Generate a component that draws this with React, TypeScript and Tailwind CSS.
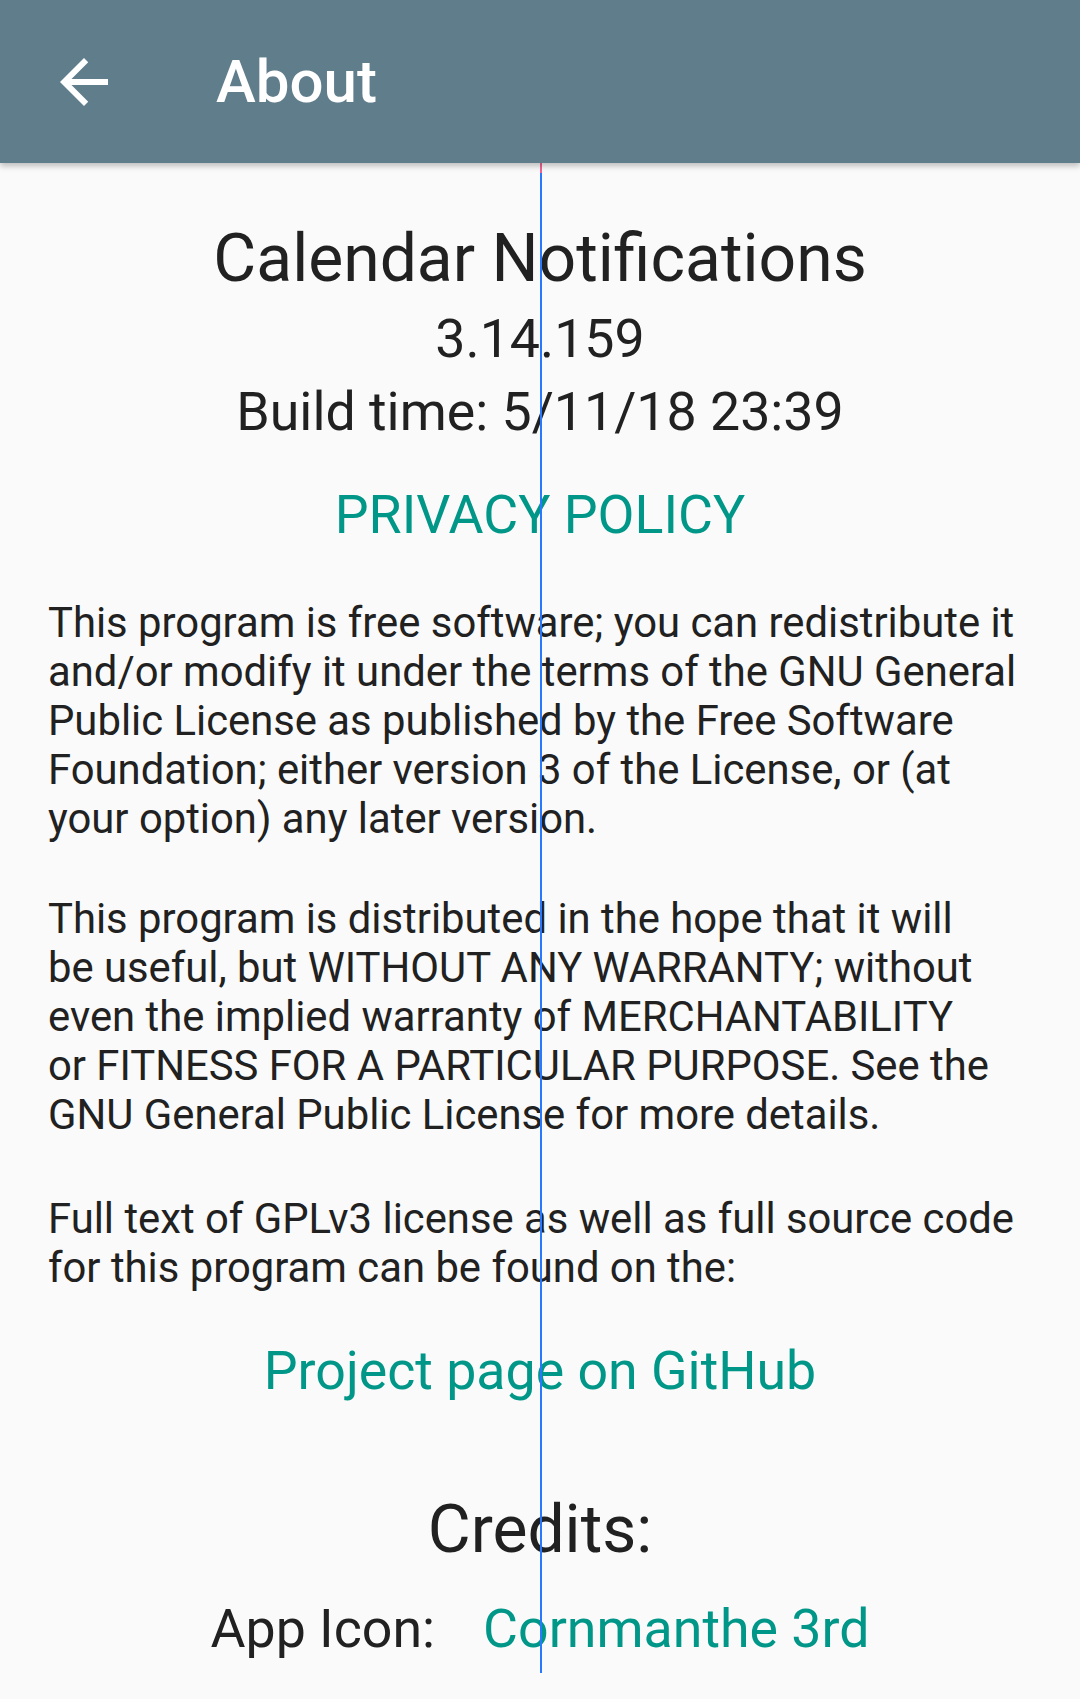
import React from "react";

const body = [
  [
    "This program is free software; you can redistribute it",
    "and/or modify it under the terms of the GNU General",
    "Public License as published by the Free Software",
    "Foundation; either version 3 of the License, or (at",
    "your option) any later version.",
  ],
  [
    "This program is distributed in the hope that it will",
    "be useful, but WITHOUT ANY WARRANTY; without",
    "even the implied warranty of MERCHANTABILITY",
    "or FITNESS FOR A PARTICULAR PURPOSE. See the",
    "GNU General Public License for more details.",
  ],
  [
    "Full text of GPLv3 license as well as full source code",
    "for this program can be found on the:",
  ],
];

function Paragraph({ lines, className }: { lines: string[]; className?: string }) {
  return (
    <p className={"px-[48px] text-[41.8px] leading-[49px] text-[#212121] " + (className ?? "")}>
      {lines.map((l) => (
        <span key={l} className="block whitespace-nowrap">
          {l}
        </span>
      ))}
    </p>
  );
}

export default function App() {
  return (
    <div
      className="relative w-[1080px] h-[1699px] bg-[#fafafa] overflow-hidden"
      style={{ fontFamily: "Roboto, 'Noto Sans', sans-serif" }}
    >
      <header className="relative z-10 h-[163px] bg-[#607d8b] flex items-center shadow-[0_3px_6px_rgba(0,0,0,0.25)]">
        <button className="ml-[48px] w-[72px] h-[72px] flex items-center justify-center">
          <svg viewBox="0 0 24 24" width="72" height="72" fill="#ffffff">
            <path d="M20 11H7.83l5.59-5.59L12 4l-8 8 8 8 1.41-1.41L7.83 13H20v-2z" />
          </svg>
        </button>
        <h1 className="ml-[96px] text-[60px] font-medium text-white leading-none">About</h1>
      </header>

      <main className="flex flex-col">
        <div className="pt-[57px] flex flex-col items-center text-[#212121]">
          <h2 className="text-[66px] leading-[77px]">Calendar Notifications</h2>
          <div className="mt-[10px] text-[53.7px] leading-[63px]">3.14.159</div>
          <div className="mt-[10px] text-[53.7px] leading-[63px]">Build time: 5/11/18 23:39</div>
          <a className="mt-[40px] text-[53.7px] leading-[63px] text-[#009688]">PRIVACY POLICY</a>
        </div>

        <Paragraph lines={body[0]} className="mt-[52px]" />
        <Paragraph lines={body[1]} className="mt-[51px]" />
        <Paragraph lines={body[2]} className="mt-[55px]" />

        <div className="flex flex-col items-center">
          <a className="mt-[47px] text-[53.7px] leading-[63px] text-[#009688]">Project page on GitHub</a>
          <h2 className="mt-[89px] text-[66px] leading-[77px] text-[#212121]">Credits:</h2>
          <div className="mt-[29px] flex items-center gap-[48px] text-[53.7px] leading-[63px]">
            <span className="text-[#212121]">App Icon:</span>
            <a className="text-[#009688]">Cornmanthe 3rd</a>
          </div>
        </div>
      </main>

      {/* layout guide overlay */}
      <div className="absolute left-[540px] top-[163px] w-[2px] h-[1510px] bg-[#2979ff]">
        <div className="h-[10px] w-full bg-[#f06292]" />
      </div>
    </div>
  );
}
